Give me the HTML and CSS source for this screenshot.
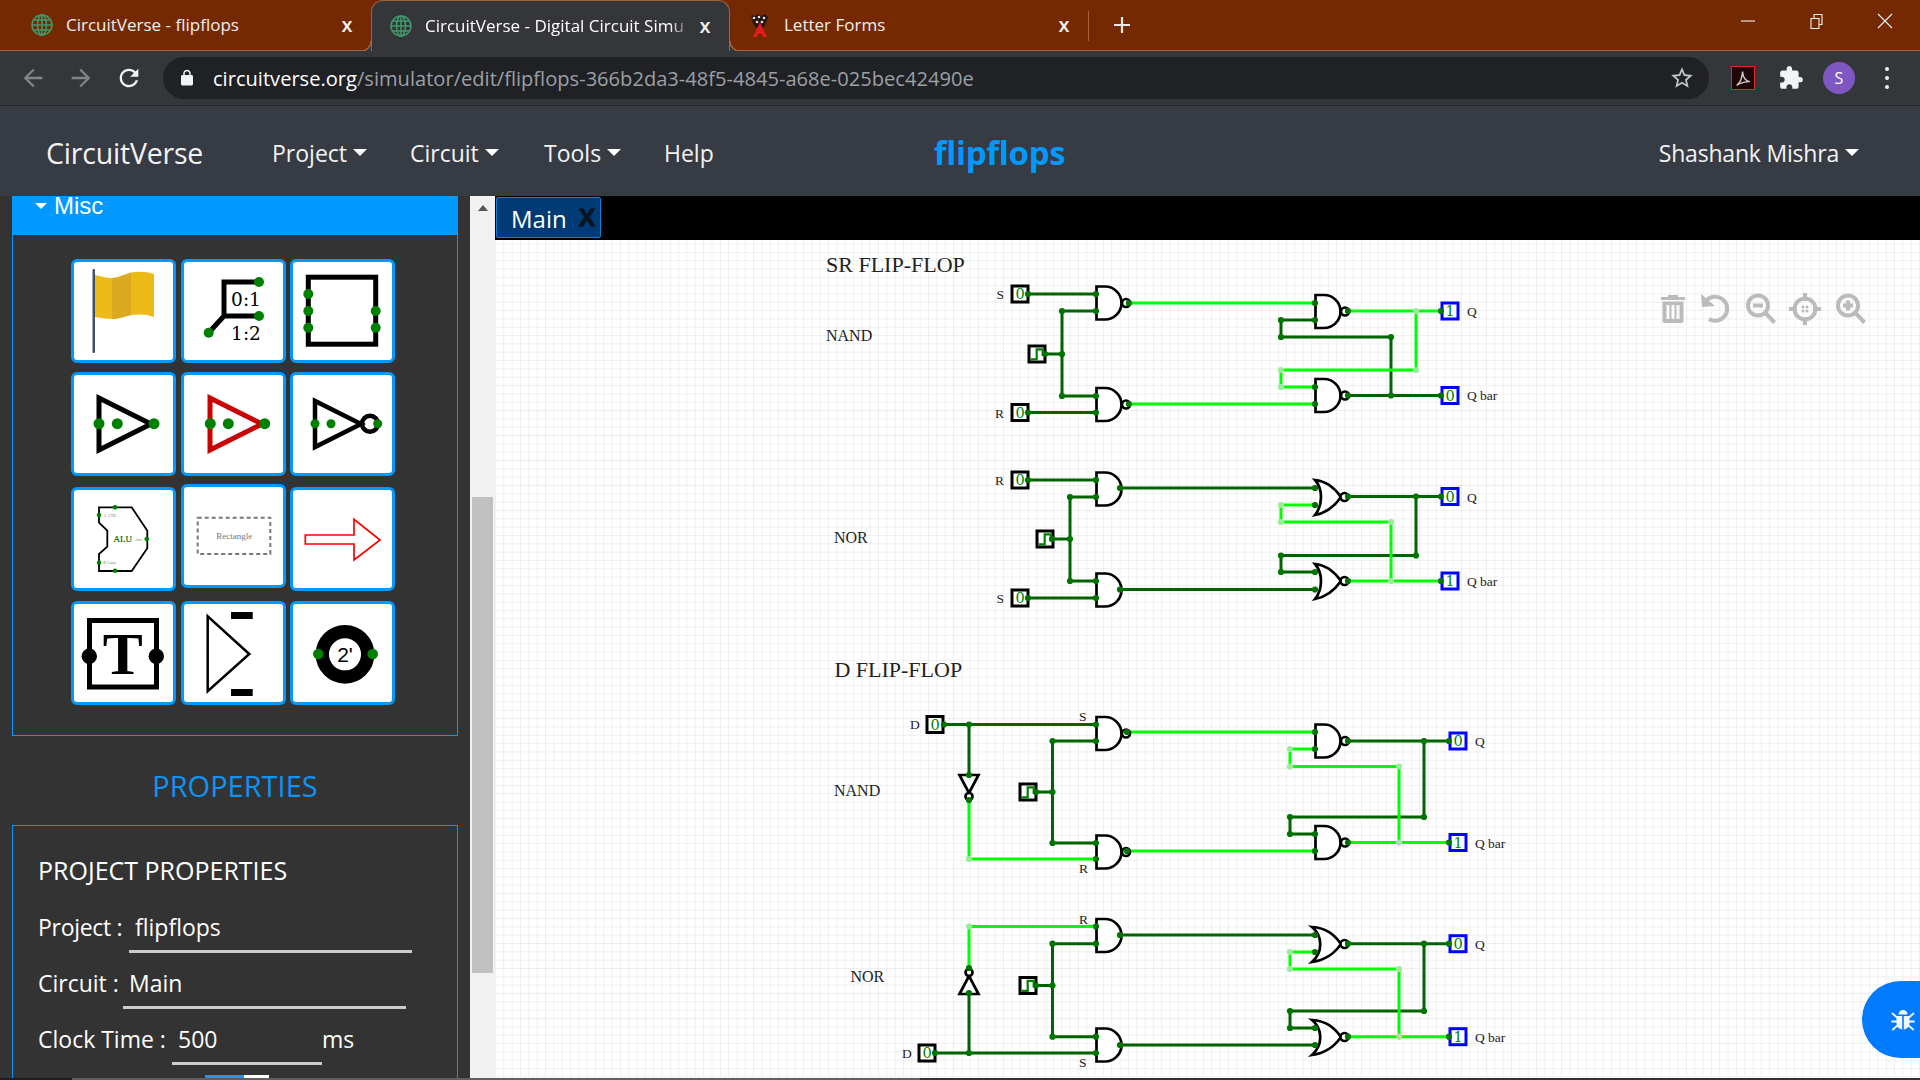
FILE: index.html
```html
<!DOCTYPE html>
<html lang="en">
<head>
  <meta charset="UTF-8" />
  <meta name="viewport" content="width=device-width, initial-scale=1" />
  <title>CircuitVerse - flipflops</title>
  <link rel="stylesheet" href="styles.css">
</head>
<body>
  <!-- browser tabs -->
  <div class="tabstrip">
    <div class="tab tab-first">
      <svg class="favicon" viewBox="0 0 22 24"><use href="#globe"/></svg>
      <span class="tab-title">CircuitVerse - flipflops</span>
      <span class="tab-close">x</span>
    </div>
    <div class="tab active">
      <svg class="favicon" viewBox="0 0 22 24"><use href="#globe"/></svg>
      <span class="tab-title">CircuitVerse - Digital Circuit Simu</span>
      <span class="tab-close">x</span>
    </div>
    <div class="tab">
      <svg class="favicon" viewBox="0 0 22 24">
        <path d="M2 2l4 1 3-2 3 2 4-2 3 3-2 6-3 5H7L4 10z" fill="#241414"/>
        <path d="M11 9l7 15h-4l-1-3H9l-1 3H4z" fill="#e01b1b"/>
        <circle cx="5" cy="5" r="1.300" fill="#ddd"/><circle cx="10" cy="4" r="1.300" fill="#ddd"/><circle cx="15" cy="5" r="1.300" fill="#ddd"/><circle cx="8" cy="9" r="1.300" fill="#ddd"/><circle cx="13" cy="9" r="1.300" fill="#ddd"/>
      </svg>
      <span class="tab-title">Letter Forms</span>
      <span class="tab-close">x</span>
    </div>
    <span class="tab-sep"></span>
    <svg class="tab-new" viewBox="0 0 18 18"><path d="M9 1v16M1 9h16"/></svg>
    <div class="win-controls">
      <svg viewBox="0 0 16 16"><path d="M1 8h14"/></svg>
      <svg viewBox="0 0 16 16"><path d="M3 5.500h8v10H3zM6 5.500V1.500h8v10h-3"/></svg>
      <svg viewBox="0 0 16 16"><path d="M1 1l14 14M15 1L1 15"/></svg>
    </div>
  </div>

  <!-- browser toolbar -->
  <div class="toolbar">
    <svg class="tb-btn dim" viewBox="0 0 24 24"><path d="M20 11H7.830l5.590-5.590L12 4l-8 8 8 8 1.410-1.410L7.830 13H20v-2z"/></svg>
    <svg class="tb-btn dim" viewBox="0 0 24 24"><path d="M12 4l-1.410 1.410L16.170 11H4v2h12.170l-5.580 5.590L12 20l8-8z"/></svg>
    <svg class="tb-btn" viewBox="0 0 24 24"><path d="M17.650 6.350C16.200 4.900 14.210 4 12 4c-4.420 0-7.990 3.580-7.990 8s3.570 8 7.990 8c3.730 0 6.840-2.550 7.730-6h-2.080c-.82 2.330-3.040 4-5.650 4-3.310 0-6-2.690-6-6s2.690-6 6-6c1.660 0 3.140.69 4.220 1.780L13 11h7V4l-2.350 2.350z"/></svg>
    <div class="omnibox">
      <svg class="lock" viewBox="0 0 24 24"><path d="M18 8h-1V6c0-2.760-2.240-5-5-5S7 3.240 7 6v2H6c-1.100 0-2 .9-2 2v10c0 1.100.9 2 2 2h12c1.100 0 2-.9 2-2V10c0-1.100-.9-2-2-2zm-3 0H9V6c0-1.660 1.340-3 3-3s3 1.340 3 3v2z"/></svg>
      <span class="url"><b>circuitverse.org</b>/simulator/edit/flipflops-366b2da3-48f5-4845-a68e-025bec42490e</span>
      <svg class="star" viewBox="0 0 24 24"><path d="M22 9.240l-7.190-.62L12 2 9.190 8.630 2 9.240l5.460 4.730L5.820 21 12 17.270 18.180 21l-1.630-7.030L22 9.240zM12 15.400l-3.760 2.270 1-4.280-3.320-2.880 4.380-.38L12 6.100l1.710 4.040 4.380.38-3.320 2.880 1 4.280L12 15.400z"/></svg>
    </div>
    <div class="tb-slot"><span class="pdf-ext"><svg viewBox="0 0 24 24"><path d="M5 20c3-2 6-8 6.500-15 .5 7 4 11 8 11-5 0-10 1-14.500 4z"/></svg></span></div>
    <div class="tb-slot"><svg class="puzzle" viewBox="0 0 24 24"><path d="M20.500 11H19V7c0-1.100-.9-2-2-2h-4V3.500C13 2.120 11.880 1 10.500 1S8 2.120 8 3.500V5H4c-1.100 0-1.990.9-1.990 2v3.800H3.500c1.490 0 2.700 1.210 2.700 2.700s-1.210 2.700-2.700 2.700H2V20c0 1.100.9 2 2 2h3.800v-1.500c0-1.490 1.210-2.700 2.700-2.700 1.490 0 2.700 1.210 2.700 2.700V22H17c1.100 0 2-.9 2-2v-4h1.500c1.380 0 2.500-1.120 2.500-2.500S21.880 11 20.500 11z"/></svg></div>
    <div class="tb-slot"><span class="avatar">S</span></div>
    <div class="tb-slot"><span class="kebab"><i></i><i></i><i></i></span></div>
  </div>

  <!-- app navbar -->
  <div class="navbar">
    <span class="brand">CircuitVerse</span>
    <span class="nav-item nav-project">Project<i class="caret"></i></span>
    <span class="nav-item nav-circuit">Circuit<i class="caret"></i></span>
    <span class="nav-item nav-tools">Tools<i class="caret"></i></span>
    <span class="nav-item">Help</span>
    <span class="project-title">flipflops</span>
    <span class="nav-item nav-user">Shashank Mishra<i class="caret"></i></span>
  </div>

  <div class="main">
    <div class="sidebar">
      <div class="panel-head"><i class="caret caret-head"></i>Misc</div>
      <div class="panel-body">
        <div class="modules">
          <div class="tile"><svg viewBox="3 3 99 98">
            <path d="M24 16C32 18 36 19 41 19 47 19 52 16 60 13.500 68 12 76 13 83 15V58C76 55 68 55 60 56 52 58 47 60 41 60 36 60 30 59 24 58Z" fill="#ecbb17"/>
            <path d="M41 19C47 19 52 16 60 13.500V56C52 58 47 60 41 60Z" fill="#dcaa22"/>
            <rect x="21.500" y="10" width="2.500" height="84" rx="1" fill="#47506b"/>
          </svg></div>
          <div class="tile"><svg viewBox="3 3 99 98">
            <path class="ink" d="M27.700 73.700L43 57V23H78M43 57H78"/>
            <text class="dseri" x="65" y="47">0:1</text><text class="dseri" x="65" y="80.500">1:2</text>
            <circle class="pin" cx="27.700" cy="73.700" r="5"/><circle class="pin" cx="78" cy="23" r="5"/><circle class="pin" cx="78" cy="57" r="5"/>
          </svg></div>
          <div class="tile"><svg viewBox="3 3 99 98">
            <rect class="ink" x="18.300" y="18.200" width="67.400" height="67"/>
            <circle class="pin" cx="18.300" cy="35" r="5"/><circle class="pin" cx="18.300" cy="52" r="5"/><circle class="pin" cx="18.300" cy="68.700" r="5"/>
            <circle class="pin" cx="85.700" cy="52" r="5"/><circle class="pin" cx="85.700" cy="68.700" r="5"/>
          </svg></div>

          <div class="tile"><svg viewBox="3 3 99 98">
            <path class="ink" d="M28 26V78L80 52Z"/>
            <circle class="pin" cx="28" cy="51.700" r="5.500"/><circle class="pin" cx="46.300" cy="51.700" r="5.500"/><circle class="pin" cx="83" cy="51.700" r="5.500"/>
          </svg></div>
          <div class="tile"><svg viewBox="3 3 99 98">
            <path class="ink red" d="M29 26V78L81 52Z"/>
            <circle class="pin" cx="29.300" cy="51.700" r="5.500"/><circle class="pin" cx="47.300" cy="51.700" r="5.500"/><circle class="pin" cx="83.700" cy="51.700" r="5.500"/>
          </svg></div>
          <div class="tile"><svg viewBox="3 3 99 98">
            <path class="ink thin" d="M25 29V75L71 52Z"/>
            <circle class="ink thin" cx="80" cy="51.700" r="8"/>
            <circle class="pin" cx="25" cy="51.700" r="4.500"/><circle class="pin" cx="41" cy="51.700" r="4.500"/><circle class="pin" cx="87.700" cy="51.700" r="4.500"/>
          </svg></div>

          <div class="tile tile-low"><svg viewBox="3 3 99 98">
            <path class="ink hair" d="M28 20.300H60.700L76.300 43.700V61.300L60.700 84H28V67L36.300 59.700V43.700L28 35.700Z"/>
            <text class="alu" x="51.700" y="55">ALU</text>
            <text class="tiny" x="32.300" y="29.500">A&#160;&#160;CTR</text><text class="tiny" x="32.300" y="77">B Carry</text><text class="tiny" x="64" y="53.500">Ans</text>
            <circle class="pin" cx="44" cy="20.300" r="2.300"/><circle class="pin" cx="28" cy="28" r="2.300"/><circle class="pin" cx="75.700" cy="52" r="2.300"/>
            <circle class="pin" cx="28" cy="75.700" r="2.300"/><circle class="pin" cx="44" cy="83.700" r="2.300"/>
          </svg></div>
          <div class="tile tile-high"><svg viewBox="3 3 99 98">
            <rect class="dash" x="16.700" y="33.700" width="72.600" height="36.300"/>
            <text class="rect-label" x="53.300" y="55">Rectangle</text>
          </svg></div>
          <div class="tile tile-low"><svg viewBox="3 3 99 98">
            <path class="arrow" d="M15.300 48H64V32.300L90 53 64 73V57H15.300Z"/>
          </svg></div>

          <div class="tile tile-last"><svg viewBox="3 3 99 98">
            <rect class="ink" x="18.500" y="19.500" width="67" height="66.500"/>
            <text class="big-t" x="51.700" y="73.300">T</text>
            <circle cx="18.300" cy="55.300" r="7.700"/><circle cx="85.300" cy="55.300" r="7.700"/>
          </svg></div>
          <div class="tile tile-last"><svg viewBox="3 3 99 98">
            <path class="ink hair2" d="M26.700 15.300V90.300L68.300 53Z"/>
            <rect x="50" y="11" width="21.700" height="7"/><rect x="50" y="88" width="21.700" height="7"/>
          </svg></div>
          <div class="tile tile-last"><svg viewBox="3 3 99 98">
            <circle class="ring" cx="55" cy="53.300" r="22.700"/>
            <text class="ring-label" x="55" y="60.500">2'</text>
            <circle class="pin" cx="28.300" cy="53" r="5.300"/><circle class="pin" cx="82.700" cy="53" r="5.300"/>
          </svg></div>
        </div>
      </div>

      <div class="properties-title">PROPERTIES</div>
      <div class="properties">
        <div class="prop-head">PROJECT PROPERTIES</div>
        <div class="prop-row"><span class="prop-label lbl-project">Project :</span><span class="prop-input input-long">flipflops</span></div>
        <div class="prop-row"><span class="prop-label lbl-circuit">Circuit :</span><span class="prop-input input-long">Main</span></div>
        <div class="prop-row"><span class="prop-label lbl-clock">Clock Time :</span><span class="prop-input input-short">500</span><span class="prop-unit">ms</span></div>
        <div class="toggle"><i></i><i></i></div>
      </div>
    </div>

    <div class="gutter"><i class="gutter-arrow"></i><div class="gutter-thumb"></div></div>

    <div class="workspace">
      <div class="tabbar"><div class="circuit-tab">Main<span class="circuit-close">X</span></div></div>
      <div class="canvas">
        <svg class="diagram" width="1425" height="838" viewBox="495 240 1425 838">
          <defs>
            <g id="globe" fill="none" stroke="#3f9a6d" stroke-width="1.500">
              <circle cx="11" cy="12" r="10"/><ellipse cx="11" cy="12" rx="4.500" ry="10"/>
              <path d="M1 12h20M2.500 7h17M2.500 17h17M11 2v20"/>
            </g>
            <path id="and" class="gate" d="M1.500 1.500H10A16.500 16.500 0 0 1 10 34.500H1.500Z"/>
            <g id="nand"><use href="#and"/><circle class="gate" cx="31" cy="18" r="4"/></g>
            <g id="nor"><path class="gate" d="M1 1C12 2 20 8 27 18 20 28 12 34 1 36 9 26 9 10 1 1Z"/><circle class="gate" cx="30.500" cy="18" r="4"/></g>
            <g id="nor-wide"><path class="gate" d="M1 1C15 2 23 8 30 18 23 28 15 34 1 36 12 26 12 10 1 1Z"/><circle class="gate" cx="33.500" cy="18" r="4"/></g>
            <rect id="inbox" class="box-in" x="-8" y="-8" width="16" height="16"/>
            <rect id="outbox" class="box-out" x="-8" y="-8" width="16" height="16"/>
            <g id="clock"><use href="#inbox"/><path class="wave" d="M-6.300 5.300H-.3V-4.700H5.700V2"/></g>
          </defs>

          <g class="labels">
            <text class="heading" x="826" y="272">SR FLIP-FLOP</text>
            <text class="heading" x="834.400" y="677">D FLIP-FLOP</text>
            <text class="section" x="826" y="341">NAND</text>
            <text class="section" x="834" y="543">NOR</text>
            <text class="section" x="834" y="796">NAND</text>
            <text class="section" x="850.500" y="982">NOR</text>
            <text x="996.500" y="299">S</text><text x="995" y="417.500">R</text>
            <text x="995" y="485">R</text><text x="996.500" y="603">S</text>
            <text x="910" y="729">D</text><text x="902" y="1058">D</text>
            <text x="1079" y="721">S</text><text x="1079" y="873">R</text>
            <text x="1079" y="924">R</text><text x="1079" y="1067">S</text>
            <text x="1467" y="316">Q</text><text x="1467" y="400">Q bar</text>
            <text x="1467" y="501.500">Q</text><text x="1467" y="586">Q bar</text>
            <text x="1475" y="746">Q</text><text x="1475" y="847.500">Q bar</text>
            <text x="1475" y="948.700">Q</text><text x="1475" y="1041.700">Q bar</text>
          </g>

          <!-- SR flip-flop, NAND -->
          <path class="wire-off" d="M1028 294H1096M1045 354H1062M1062 311H1096M1062 311V396M1062 396H1096M1028 412.500H1096M1281 320H1315M1281 320V337H1391V395.500M1348 395.500H1441"/>
          <path class="wire-on" d="M1129 303H1315M1129 404H1315M1348 311H1441M1416 311V370H1281V387H1315"/>
          <!-- SR flip-flop, NOR -->
          <path class="wire-off" d="M1028 480H1096M1070 497H1096M1070 497V581M1052 539H1070M1070 581H1096M1028 598H1096M1120 488H1315M1120 589.500H1315M1348 496.500H1441M1416 496.500V555.500H1281V572H1315"/>
          <path class="wire-on" d="M1281 505H1315M1281 505V522H1391V581M1348 581H1441"/>
          <!-- D flip-flop, NAND -->
          <path class="wire-off" d="M944 724.500H1096M969 724.500V775M1052.500 741H1096M1052.500 741V843M1036 792H1052.500M1052.500 843H1096M1348 741H1449M1424 741V817H1290V834H1315"/>
          <path class="wire-on" d="M1127 732H1315M969 800V859H1096M1127 851H1315M1290 749H1315M1290 749V766.500H1399V842.500M1348 842.500H1449"/>
          <!-- D flip-flop, NOR -->
          <path class="wire-off" d="M1096 943.700H1052.500V1036.700H1096M1036 985.500H1052.500M935 1053H1096M969 1053V993M1120 935H1315M1120 1045H1315M1348 943.700H1449M1424 943.700V1011H1290V1028H1315"/>
          <path class="wire-on" d="M969 968V926.500H1096M1290 952H1315M1290 952V969H1399V1036.700M1348 1036.700H1449"/>

          <use href="#nand" x="1095" y="285"/><use href="#nand" x="1095" y="386.500"/>
          <use href="#nand" x="1314" y="293.500"/><use href="#nand" x="1314" y="377.500"/>
          <use href="#and" x="1095" y="471"/><use href="#and" x="1095" y="572"/>
          <use href="#nor" x="1314" y="479"/><use href="#nor" x="1314" y="563"/>
          <use href="#nand" x="1095" y="715.500"/><use href="#nand" x="1095" y="834"/>
          <use href="#nand" x="1314" y="723"/><use href="#nand" x="1314" y="824.500"/>
          <use href="#and" x="1095" y="917.500"/><use href="#and" x="1095" y="1027"/>
          <use href="#nor-wide" x="1311" y="926"/><use href="#nor-wide" x="1311" y="1019"/>

          <path class="gate" d="M959.500 775H978.500L969 793Z"/><circle class="gate" cx="969" cy="796.500" r="3.500"/>
          <path class="gate" d="M959.500 994H978.500L969 976Z"/><circle class="gate" cx="969" cy="972.500" r="3.500"/>

          <use href="#inbox" x="1020" y="294"/><use href="#inbox" x="1020" y="412.500"/>
          <use href="#inbox" x="1020" y="480"/><use href="#inbox" x="1020" y="598"/>
          <use href="#inbox" x="935" y="724.500"/><use href="#inbox" x="927" y="1053"/>
          <use href="#clock" x="1037" y="354"/><use href="#clock" x="1045" y="539"/>
          <use href="#clock" x="1028" y="792"/><use href="#clock" x="1028" y="985.500"/>
          <use href="#outbox" x="1450" y="311"/><use href="#outbox" x="1450" y="395.500"/>
          <use href="#outbox" x="1450" y="496.500"/><use href="#outbox" x="1450" y="581"/>
          <use href="#outbox" x="1458" y="741"/><use href="#outbox" x="1458" y="842.500"/>
          <use href="#outbox" x="1458" y="943.700"/><use href="#outbox" x="1458" y="1036.700"/>

          <g class="values">
            <text x="1020" y="299">0</text><text x="1020" y="417.500">0</text><text x="1020" y="485">0</text><text x="1020" y="603">0</text>
            <text x="935" y="729.500">0</text><text x="927" y="1058">0</text>
            <text x="1450" y="316">1</text><text x="1450" y="400.500">0</text><text x="1450" y="501.500">0</text><text x="1450" y="586">1</text>
            <text x="1458" y="746">0</text><text x="1458" y="847.500">1</text><text x="1458" y="948.700">0</text><text x="1458" y="1041.700">1</text>
          </g>

          <g class="nodes">
            <circle cx="1028" cy="294"/><circle cx="1096" cy="294"/><circle cx="1062" cy="311"/><circle cx="1096" cy="311"/><circle cx="1045" cy="354"/><circle cx="1062" cy="354"/><circle cx="1062" cy="396"/><circle cx="1096" cy="396"/><circle cx="1028" cy="412.500"/><circle cx="1096" cy="412.500"/><circle cx="1129" cy="303"/><circle cx="1129" cy="404"/><circle cx="1315" cy="303"/><circle cx="1281" cy="320"/><circle cx="1315" cy="320"/><circle cx="1281" cy="337"/><circle cx="1391" cy="337"/><circle cx="1348" cy="311"/><circle cx="1441" cy="311"/><circle cx="1315" cy="387"/><circle cx="1315" cy="404"/><circle cx="1348" cy="395.500"/><circle cx="1391" cy="395.500"/><circle cx="1441" cy="395.500"/>
            <circle cx="1028" cy="480"/><circle cx="1096" cy="480"/><circle cx="1070" cy="497"/><circle cx="1096" cy="497"/><circle cx="1052" cy="539"/><circle cx="1070" cy="539"/><circle cx="1070" cy="581"/><circle cx="1096" cy="581"/><circle cx="1028" cy="598"/><circle cx="1096" cy="598"/><circle cx="1120" cy="488"/><circle cx="1120" cy="589.500"/><circle cx="1315" cy="488"/><circle cx="1315" cy="505"/><circle cx="1348" cy="496.500"/><circle cx="1416" cy="496.500"/><circle cx="1441" cy="496.500"/><circle cx="1416" cy="555.500"/><circle cx="1281" cy="555.500"/><circle cx="1281" cy="572"/><circle cx="1315" cy="572"/><circle cx="1315" cy="589.500"/><circle cx="1348" cy="581"/><circle cx="1441" cy="581"/>
            <circle cx="944" cy="724.500"/><circle cx="969" cy="724.500"/><circle cx="1096" cy="724.500"/><circle cx="1052.500" cy="741"/><circle cx="1096" cy="741"/><circle cx="969" cy="775"/><circle cx="969" cy="800"/><circle cx="1036" cy="792"/><circle cx="1052.500" cy="792"/><circle cx="1052.500" cy="843"/><circle cx="1096" cy="843"/><circle cx="1096" cy="859"/><circle cx="1127" cy="732"/><circle cx="1127" cy="851"/><circle cx="1315" cy="732"/><circle cx="1315" cy="749"/><circle cx="1348" cy="741"/><circle cx="1424" cy="741"/><circle cx="1449" cy="741"/><circle cx="1424" cy="817"/><circle cx="1290" cy="817"/><circle cx="1290" cy="834"/><circle cx="1315" cy="834"/><circle cx="1315" cy="851"/><circle cx="1348" cy="842.500"/><circle cx="1449" cy="842.500"/>
            <circle cx="1096" cy="926.500"/><circle cx="1096" cy="943.700"/><circle cx="1052.500" cy="943.700"/><circle cx="1036" cy="985.500"/><circle cx="1052.500" cy="985.500"/><circle cx="1052.500" cy="1036.700"/><circle cx="1096" cy="1036.700"/><circle cx="1096" cy="1053"/><circle cx="935" cy="1053"/><circle cx="969" cy="1053"/><circle cx="969" cy="993"/><circle cx="969" cy="968"/><circle cx="1120" cy="935"/><circle cx="1120" cy="1045"/><circle cx="1315" cy="935"/><circle cx="1315" cy="952"/><circle cx="1348" cy="943.700"/><circle cx="1424" cy="943.700"/><circle cx="1449" cy="943.700"/><circle cx="1424" cy="1011"/><circle cx="1290" cy="1011"/><circle cx="1290" cy="1028"/><circle cx="1315" cy="1028"/><circle cx="1315" cy="1045"/><circle cx="1348" cy="1036.700"/><circle cx="1449" cy="1036.700"/>
          </g>
          <g class="nodes-lit">
            <circle cx="1416" cy="311"/><circle cx="1416" cy="370"/><circle cx="1281" cy="370"/><circle cx="1281" cy="387"/>
            <circle cx="1281" cy="505"/><circle cx="1281" cy="522"/><circle cx="1391" cy="522"/><circle cx="1391" cy="581"/>
            <circle cx="969" cy="859"/><circle cx="1290" cy="749"/><circle cx="1290" cy="766.500"/><circle cx="1399" cy="766.500"/><circle cx="1399" cy="842.500"/>
            <circle cx="969" cy="926.500"/><circle cx="1290" cy="952"/><circle cx="1290" cy="969"/><circle cx="1399" cy="969"/><circle cx="1399" cy="1036.700"/>
          </g>
        </svg>

        <div class="canvas-tools">
          <svg viewBox="0 0 42 42"><path d="M16 7h10v2h7v3H9V9h7zM10.500 13.500h21V33a2 2 0 0 1-2 2h-17a2 2 0 0 1-2-2zM14.500 17v14h3V17zM19.500 17v14h3V17zM24.500 17v14h3V17z" fill-rule="evenodd"/></svg>
          <svg viewBox="0 0 42 42"><path class="tool-line" d="M10 13A12 12 0 1 1 13 31"/><path d="M5 6l1 13 13-1z"/></svg>
          <svg viewBox="0 0 42 42"><circle class="tool-line" cx="18" cy="17.500" r="10"/><path class="tool-line" d="M13 17.500h10M25.500 25l9 9.500"/></svg>
          <svg viewBox="0 0 42 42"><circle class="tool-line" cx="21" cy="21" r="10.500"/><path class="tool-line" d="M21 5v8M21 29v8M5 21h8M29 21h8"/><circle cx="19" cy="19" r="1.500"/><circle cx="23" cy="19" r="1.500"/><circle cx="19" cy="23" r="1.500"/><circle cx="23" cy="23" r="1.500"/></svg>
          <svg viewBox="0 0 42 42"><circle class="tool-line" cx="20" cy="17.500" r="10"/><path class="tool-line" d="M15 17.500h10M20 12.500v10M27.500 25l9 9.500"/></svg>
        </div>

        <div class="report-bug">
          <svg viewBox="0 0 24 24"><path d="M7.500 6.500a4.500 4.500 0 0 1 9 0zM5.500 8h5.700v13.500C8 21 5.500 18.500 5.500 15zM12.800 8h5.700v7c0 3.500-2.500 6-5.700 6.500z"/><path class="bug-legs" d="M1.500 5.500L6 9.500M22.500 5.500L18 9.500M1 13.500h5M23 13.500h-5M1.800 21.500L6.500 17.500M22.200 21.500L17.500 17.500"/></svg>
        </div>
      </div>
    </div>
  </div>
  <div class="taskbar"></div>
</body>
</html>
```

FILE: styles.css
```css
html,body{margin:0;padding:0;height:100%;overflow:hidden;}
body{width:1920px;height:1080px;display:flex;flex-direction:column;font-family:"Open Sans",sans-serif;color:#fff;background:#333;}

/* browser chrome */
.tabstrip{height:50px;flex:none;display:flex;align-items:stretch;background:#742902;border-bottom:1px solid #a4623c;font-size:17px;}
.tab{width:358px;box-sizing:border-box;padding-left:19px;display:flex;align-items:center;position:relative;color:#eee;flex:none;}
.tab-first{width:371px;padding-left:31px;}
.tab.active{width:359px;background:#35363a;border:1px solid #a4623c;border-bottom:none;border-radius:12px 12px 0 0;margin-bottom:-1px;padding-left:18px;color:#fff;}
.tab.active::before,.tab.active::after{content:"";position:absolute;bottom:0;width:10px;height:10px;}
.tab.active::before{left:-11px;background:radial-gradient(circle at 0 0,transparent 9px,#a4623c 9.500px,#a4623c 10.500px,#35363a 11px);}
.tab.active::after{right:-11px;background:radial-gradient(circle at 100% 0,transparent 9px,#a4623c 9.500px,#a4623c 10.500px,#35363a 11px);}
.favicon{width:22px;height:24px;margin-right:13px;flex:none;}
.tab-title{flex:1;white-space:nowrap;overflow:hidden;margin-top:-1px;}
.active .tab-title{margin-right:2px;-webkit-mask-image:linear-gradient(90deg,#000 92%,transparent);mask-image:linear-gradient(90deg,#000 92%,transparent);}
.tab-close{width:24px;margin-right:12px;text-align:center;font-size:20px;line-height:24px;font-weight:600;color:#f2f2f2;flex:none;}
.tab-sep{width:1px;height:30px;margin-top:11px;background:#a4623c;flex:none;}
.tab-new{width:18px;height:18px;margin:16px 0 0 24px;fill:none;stroke:#e8e8e8;stroke-width:2.200;flex:none;}
.win-controls{margin-left:auto;display:flex;height:42px;}
.win-controls svg{width:16px;height:16px;padding:13px 26px;fill:none;stroke:#f2f2f2;stroke-width:1.100;}
.win-controls svg:last-child{padding:13px 27px;}

.toolbar{height:55px;flex:none;box-sizing:border-box;display:flex;align-items:center;padding-left:9px;background:#35363a;border-bottom:1px solid #232427;}
.tb-btn{width:28px;height:28px;padding:0 10px;fill:#f1f3f4;flex:none;}
.tb-btn.dim{fill:#808387;}
.tb-slot{width:48px;flex:none;display:flex;justify-content:center;align-items:center;}
.omnibox{width:1546px;height:42px;margin:0 10px;box-sizing:border-box;display:flex;align-items:center;padding:0 14px 0 15px;background:#202124;border-radius:21px;flex:none;}
.lock{width:18px;height:18px;fill:#f1f3f4;margin-right:17px;flex:none;}
.url{font-size:20.100px;color:#9aa0a6;white-space:nowrap;flex:1;}
.url b{font-weight:400;color:#fff;}
.star{width:26px;height:26px;fill:#c4c7c9;flex:none;}
.pdf-ext{width:22px;height:22px;display:block;background:#200606;border:1.500px solid #e0281c;}
.pdf-ext svg{display:block;width:22px;height:22px;fill:none;stroke:#ccc;stroke-width:1.500;}
.puzzle{width:26px;height:26px;fill:#f1f3f4;}
.avatar{width:32px;height:32px;border-radius:50%;background:#7e57c2;font-size:16px;line-height:32px;text-align:center;}
.kebab{display:flex;flex-direction:column;gap:5px;}
.kebab i{display:block;width:4px;height:4px;border-radius:50%;background:#f1f3f4;}

/* app navbar */
.navbar{height:90px;flex:none;display:flex;align-items:center;box-sizing:border-box;padding:3px 61px 0 46px;background:#373b43;font-size:23px;color:#f3f3f3;}
.brand{width:226px;font-size:28.500px;flex:none;letter-spacing:-.2px;}
.nav-item{white-space:nowrap;flex:none;}
.nav-project{width:138px;}
.nav-circuit{width:134px;}
.nav-tools{width:120px;}
.caret{display:inline-block;width:0;height:0;margin-left:6px;vertical-align:6px;border-top:7px solid #fff;border-left:7px solid transparent;border-right:7px solid transparent;}
.project-title{margin-left:220px;font-size:33px;font-weight:700;color:#0099ff;letter-spacing:-.3px;}
.nav-user{margin-left:auto;letter-spacing:-.2px;}

.main{flex:1;min-height:0;display:flex;}

/* left column */
.sidebar{width:470px;flex:none;box-sizing:border-box;padding-left:12px;background:#333;}
.panel-head{width:446px;height:39px;box-sizing:border-box;padding-left:42px;background:#0099ff;font:24px/20px "Liberation Sans",sans-serif;position:relative;}
.caret-head{position:absolute;left:23px;top:7px;margin:0;border-top-width:6px;border-left-width:6px;border-right-width:6px;}
.panel-body{width:446px;height:501px;box-sizing:border-box;border:1px solid #0099ff;border-top:none;padding:24px 0 0 58px;}
.modules{display:grid;grid-template-columns:repeat(3,105px);grid-template-rows:104px 104px 106px 105px;column-gap:4.500px;row-gap:9px;}
.tile{box-sizing:border-box;height:104px;border:3px solid #0099ff;border-radius:6px;background:#fff;}
.tile svg{display:block;width:99px;height:98px;}
.tile-low,.tile-last{align-self:end;}
.tile-high{margin-top:-1px;}
.ink{fill:none;stroke:#000;stroke-width:5;}
.ink.red{stroke:#cc0000;}
.ink.thin{stroke-width:4.500;}
.ink.hair{stroke-width:1.800;}
.ink.hair2{stroke-width:2.500;}
.pin{fill:#008000;}
.dseri{font:18.500px "DejaVu Serif",serif;text-anchor:middle;}
.alu{font:9px "Liberation Serif",serif;fill:#006400;stroke:#006400;stroke-width:.2;text-anchor:middle;}
.tiny{font:4px "Liberation Serif",serif;fill:#777;}
.dash{fill:none;stroke:#777;stroke-width:2;stroke-dasharray:4 3;}
.rect-label{font:9px "Liberation Serif",serif;fill:#777;text-anchor:middle;}
.arrow{fill:none;stroke:#ff0000;stroke-width:1.700;}
.big-t{font:bold 60px "Liberation Serif",serif;text-anchor:middle;}
.ring{fill:#fff;stroke:#000;stroke-width:13.300;}
.ring-label{font:21px "Liberation Sans",sans-serif;text-anchor:middle;}

.properties-title{width:446px;height:89px;box-sizing:border-box;padding-top:28px;text-align:center;font-size:29px;line-height:44px;color:#0d94f5;}
.properties{width:446px;height:253px;box-sizing:border-box;border:1px solid #0d94f5;border-bottom:none;padding:29px 0 0 25px;}
.prop-head{font-size:25px;line-height:30px;margin-bottom:28px;}
.prop-row{display:flex;height:40px;margin-bottom:16px;font-size:23px;line-height:28px;}
.prop-label{flex:none;white-space:nowrap;}
.lbl-project{width:91px;letter-spacing:-.3px;}
.lbl-circuit{width:85px;}
.lbl-clock{width:134px;}
.prop-input{box-sizing:border-box;height:40px;padding-left:6px;border-bottom:3px solid #ccc;flex:none;}
.input-long{width:283px;}
.input-short{width:150px;}
.toggle{display:flex;margin:-6px 0 0 167px;height:3px;}
.toggle i{display:block;height:3px;width:39px;background:#2a93ee;}
.toggle i:last-child{width:25px;background:#fff;}

.gutter{width:25px;flex:none;box-sizing:border-box;padding:9px 2px 0;background:#f1f1f1;}
.gutter-arrow{display:block;width:0;height:0;margin:0 auto;border-bottom:6px solid #555;border-left:5px solid transparent;border-right:5px solid transparent;}
.gutter-thumb{height:476px;margin-top:286px;background:#c1c1c1;}

/* circuit area */
.workspace{flex:1;min-width:0;display:flex;flex-direction:column;}
.tabbar{height:44px;flex:none;box-sizing:border-box;padding:1px 0 0 1px;background:#000;}
.circuit-tab{width:105px;height:41px;box-sizing:border-box;border:1px solid #0a84d8;border-radius:2px;background:#003b75;padding-left:14px;font-size:24px;line-height:41px;position:relative;}
.circuit-close{position:absolute;right:5px;top:0;font:bold 24px/40px "Liberation Sans",sans-serif;color:#0b1420;-webkit-text-stroke:1px #0b1420;}
.canvas{flex:1;min-height:0;position:relative;overflow:hidden;background-color:#fff;background-image:linear-gradient(#eee 1px,transparent 1px),linear-gradient(90deg,#eee 1px,transparent 1px);background-size:8.330px 8.330px;background-position:0 3.500px;}
.diagram{position:absolute;left:0;top:0;display:block;}
.labels text{font:13.500px "Liberation Serif",serif;fill:#222;}
.labels .heading{font-size:22px;}
.labels .section{font-size:16px;}
.gate{fill:#fff;stroke:#000;stroke-width:2.700;}
.box-in{fill:#fff;stroke:#000;stroke-width:3;}
.box-out{fill:#fff;stroke:#0000ff;stroke-width:3;}
.wave{fill:none;stroke:#008000;stroke-width:2.200;}
.wire-off{fill:none;stroke:#006400;stroke-width:3;}
.wire-on{fill:none;stroke:#00ff00;stroke-width:3;}
.values text{font:14.500px "DejaVu Serif",serif;fill:#008000;text-anchor:middle;}
.nodes circle{r:3.100px;fill:#007400;}
.nodes-lit circle{r:3.100px;fill:#99ee99;}
.canvas-tools{position:absolute;left:1157px;top:48px;display:flex;gap:2px;}
.canvas-tools svg{width:42px;height:42px;fill:#bbb;display:block;}
.tool-line{fill:none;stroke:#bbb;stroke-width:4;}
.report-bug{position:absolute;right:0;top:741px;width:58px;height:77px;border-radius:38.500px 0 0 38.500px;background:#007bff;}
.report-bug svg{position:absolute;left:29px;top:27px;width:24px;height:24px;fill:#f2f7ff;}
.bug-legs{fill:none;stroke:#f2f7ff;stroke-width:1.800;stroke-linecap:round;}

.taskbar{height:2px;flex:none;background:linear-gradient(90deg,#1f1f1f 72px,#606060 72px,#606060 920px,#333 920px);}
```
